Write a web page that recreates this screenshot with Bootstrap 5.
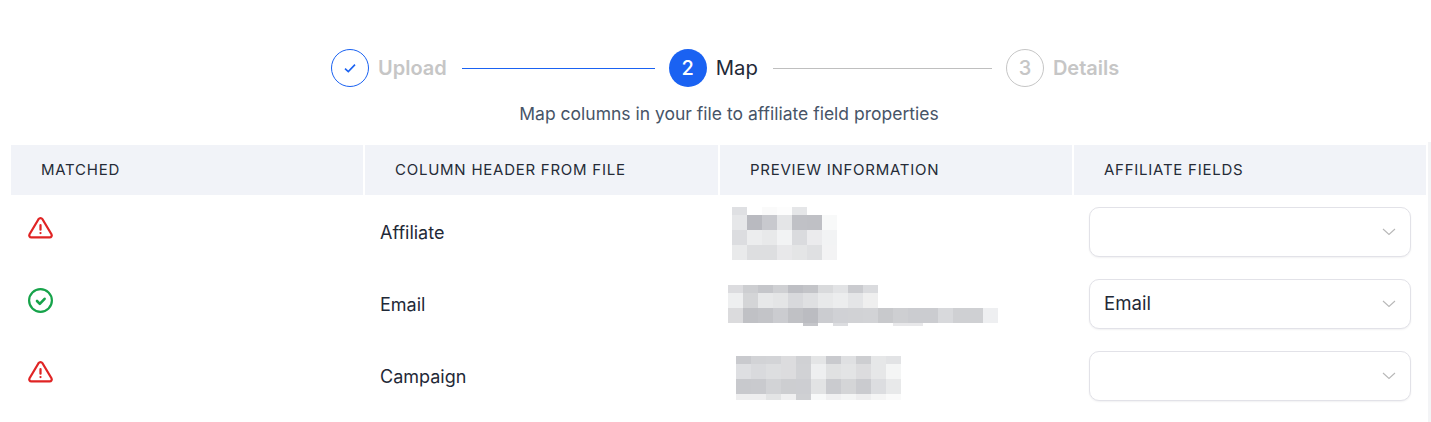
<!DOCTYPE html>
<html lang="en">

<head>
    <meta charset="UTF-8">
    <meta name="viewport" content="width=device-width, initial-scale=1.0">
    <title>Map columns</title>
    <link rel="stylesheet" href="https://cdn.jsdelivr.net/npm/bootstrap@5.3.2/dist/css/bootstrap.min.css">
    <script src="https://cdn.jsdelivr.net/npm/bootstrap@5.3.2/dist/js/bootstrap.bundle.min.js"></script>
    <style>
        html, body { height: 422px; overflow: hidden; }
        body { font-family: Inter, "Liberation Sans", sans-serif; color: #1f2937; background: #fff; }
        .map-page { padding: 49px 5px 0 11px; position: relative; }
        .page-track { position: absolute; top: 142px; right: 0; width: 3px; height: 280px; background: #f3f4f6; }

        .stepper { padding-left: 320px; height: 38px; }
        .step-dot { width: 38px; height: 38px; border-radius: 50%; font-size: 20px; font-weight: 500; flex: none; }
        .step-dot.done { border: 1px solid #1a62f2; }
        .step-dot.current { background: #1a62f2; color: #fff; }
        .step-dot.todo { border: 1px solid #c6c6c6; color: #c6c6c6; }
        .step-name { font-size: 20px; font-weight: 600; color: #c6c6c6; margin-left: 9px; line-height: 38px; }
        .step-name.current { font-weight: 400; font-size: 20.3px; color: #1f2937; }
        .step-line { height: 1px; margin-left: 15px; margin-right: 14px; }
        .line-done { width: 193px; background: #1a62f2; }
        .line-todo { width: 219px; background: #bfbfbf; }
        .step-hint { font-size: 17.5px; line-height: 24px; color: #475467; text-align: center; padding-left: 21px; margin: 15px 0 19px; }

        .map-table { width: 1415px; table-layout: fixed; margin: 0; border-collapse: separate; border-spacing: 0; }
        .map-table th { height: 51px; padding: 0 0 0 30px; background: #f1f3f8; background-clip: padding-box; border-right: 2px solid #fff; border-bottom: 1px solid #fff; font-size: 15px; font-weight: 400; letter-spacing: .75px; text-transform: uppercase; color: #252b37; vertical-align: middle; }
        .map-table th:last-child { border-right: 0; }
        .map-table td { height: 72px; padding: 0 15px; border: 0; font-size: 18px; color: #1f2937; vertical-align: middle; }
        .map-table td.status-cell { vertical-align: top; padding: 19px 0 0 16px; }
        .map-table td.preview-cell { padding-top: 3px; }
        .status-icon { display: block; width: 27px; height: 27px; }

        .mosaic { display: block; margin-left: var(--mosaic-left, 0); }
        .field-select { height: 50px; padding: 0 14px; font-size: 18.6px; color: #1f2937; border: 1px solid #e2e2e8; border-radius: 10px; box-shadow: 0 1px 2px rgba(16, 24, 40, .06); background-position: right 13px center; background-size: 16px 16px; background-image: url("data:image/svg+xml,%3csvg xmlns='http://www.w3.org/2000/svg' viewBox='0 0 16 16'%3e%3cpath fill='none' stroke='%23b8b8b8' stroke-width='1.1' d='M2 5l6 5.5L14 5'/%3e%3c/svg%3e"); }
    </style>
</head>

<body>
    <div class="map-page">
        <div class="page-track"></div>

        <!-- Passos -->
        <div class="stepper d-flex align-items-center">
            <div class="step-dot done d-flex align-items-center justify-content-center">
                <svg width="14" height="14" viewBox="0 0 14 14"><path d="M2 7.6l3.3 3L12 3.6" fill="none" stroke="#1a62f2" stroke-width="1.6" /></svg>
            </div>
            <span class="step-name">Upload</span>
            <div class="step-line line-done"></div>
            <div class="step-dot current d-flex align-items-center justify-content-center">2</div>
            <span class="step-name current">Map</span>
            <div class="step-line line-todo"></div>
            <div class="step-dot todo d-flex align-items-center justify-content-center">3</div>
            <span class="step-name">Details</span>
        </div>
        <p class="step-hint">Map columns in your file to affiliate field properties</p>

        <!-- Tabela -->
        <table class="table map-table">
            <colgroup>
                <col style="width: 354px">
                <col style="width: 355px">
                <col style="width: 354px">
                <col style="width: 352px">
            </colgroup>
            <thead>
                <tr>
                    <th>Matched</th>
                    <th>Column header from file</th>
                    <th>Preview information</th>
                    <th>Affiliate fields</th>
                </tr>
            </thead>
            <tbody>
                <tr>
                    <td class="status-cell">
                        <svg class="status-icon" viewBox="0 0 24 24" fill="none" stroke="#e02424" stroke-width="2" stroke-linecap="round" stroke-linejoin="round"><path d="M12 9v4M10.363 3.591l-8.106 13.534a1.914 1.914 0 0 0 1.636 2.871h16.214a1.914 1.914 0 0 0 1.636-2.87l-8.106-13.536a1.914 1.914 0 0 0-3.274 0zM12 16h.01" /></svg>
                    </td>
                    <td>Affiliate</td>
                    <td class="preview-cell"><svg class="mosaic" id="m1" width="300" height="53"></svg></td>
                    <td><select class="form-select field-select" aria-label="Affiliate field"><option></option><option>Email</option></select></td>
                </tr>
                <tr>
                    <td class="status-cell">
                        <svg class="status-icon" viewBox="0 0 27 27" fill="none" stroke="#16a34a" stroke-linecap="round" stroke-linejoin="round"><circle cx="13.5" cy="13.5" r="11.4" stroke-width="2.2" /><path d="M10 14l2.8 2.8 4.8-5" stroke-width="2.6" /></svg>
                    </td>
                    <td>Email</td>
                    <td class="preview-cell"><svg class="mosaic" id="m2" width="300" height="41"></svg></td>
                    <td><select class="form-select field-select" aria-label="Affiliate field"><option></option><option selected>Email</option></select></td>
                </tr>
                <tr>
                    <td class="status-cell">
                        <svg class="status-icon" viewBox="0 0 24 24" fill="none" stroke="#e02424" stroke-width="2" stroke-linecap="round" stroke-linejoin="round"><path d="M12 9v4M10.363 3.591l-8.106 13.534a1.914 1.914 0 0 0 1.636 2.871h16.214a1.914 1.914 0 0 0 1.636-2.87l-8.106-13.536a1.914 1.914 0 0 0-3.274 0zM12 16h.01" /></svg>
                    </td>
                    <td>Campaign</td>
                    <td class="preview-cell"><svg class="mosaic" id="m3" width="300" height="44"></svg></td>
                    <td><select class="form-select field-select" aria-label="Affiliate field"><option></option><option>Email</option></select></td>
                </tr>
            </tbody>
        </table>
    </div>

    <script>
        // Prévia borrada: cada linha = [altura, cores das células de 15px]
        const previews = {
            m1: { left: 12, rows: [
                [8, ["dfe0e3", "", "fafafa", "fdfdfd", "e5e6e8"]],
                [15, ["e6e7e9", "b9bac0", "c8c9ce", "e4e5e7", "c0c1c6", "bfc0c5", "f8f9f9"]],
                [15, ["dcdde0", "ecedee", "e8e9ea", "f2f3f4", "dadbde", "ebebed", "f2f3f4"]],
                [15, ["e9eaeb", "dddee0", "dddee0", "e8e8ea", "e4e5e6", "dfe0e2", "f3f3f4"]]
            ] },
            m2: { left: 8, rows: [
                [8, ["dcdcdf", "cdced1", "c5c6ca", "cfd0d3", "bebfc4", "c3c4c8", "d9dadc", "e2e3e5", "cacbcf", "dadbde"]],
                [15, ["eeeff0", "d4d5d7", "e7e8e9", "e4e5e6", "d8d9dc", "dfe0e2", "e8e9ea", "ecedee", "e4e5e7", "efefef"]],
                [15, ["dbdbdd", "c0c1c5", "c3c4c8", "cbccd0", "c0c1c5", "bbbcc1", "cbccd0", "d0d1d5", "d1d2d5", "d2d3d6", "c8c9cc", "cecfd2", "cbccd0", "cbccd0", "d8d9dc", "cfd0d3", "cfd0d3", "eeeff1"]],
                [3, ["", "", "", "", "", "c5c6ca", "", "dcdde0", "", "", "", "e8e8ea", "e8e8ea"]]
            ] },
            m3: { left: 16, rows: [
                [8, ["c9cace", "d2d3d6", "d3d4d7", "dcdcde", "d0d1d4", "e4e5e6", "c9cace", "dfe0e2", "cdced1", "e6e7e8", "e2e3e5"]],
                [15, ["dedfe2", "d9dadd", "dddee0", "dcdcde", "d1d2d5", "eeeff0", "e0e1e2", "e3e4e5", "dcdcde", "e6e7e8", "f4f5f5"]],
                [15, ["c8c9cd", "c9cace", "d2d3d6", "cdced1", "cdced2", "e2e3e4", "cacbcf", "d4d5d7", "cacbcf", "dcdde0", "e8e9ea"]],
                [6, ["eeeeef", "eeeeef", "e3e4e5", "f0f0f1", "cfd0d3", "f8f9f9", "f0f0f1", "f4f5f5", "eeeeef", "f5f5f5", "fafafa"]]
            ] }
        };

        Object.keys(previews).forEach(id => {
            let svg = document.getElementById(id);
            let p = previews[id];
            svg.style.setProperty("--mosaic-left", (p.left - 15) + "px");
            let y = 0, html = "";
            p.rows.forEach(([h, cores]) => {
                cores.forEach((c, i) => {
                    if (c) html += `<rect x="${i * 15}" y="${y}" width="15" height="${h}" fill="#${c}"/>`;
                });
                y += h;
            });
            svg.innerHTML = html;
        });
    </script>
</body>

</html>
